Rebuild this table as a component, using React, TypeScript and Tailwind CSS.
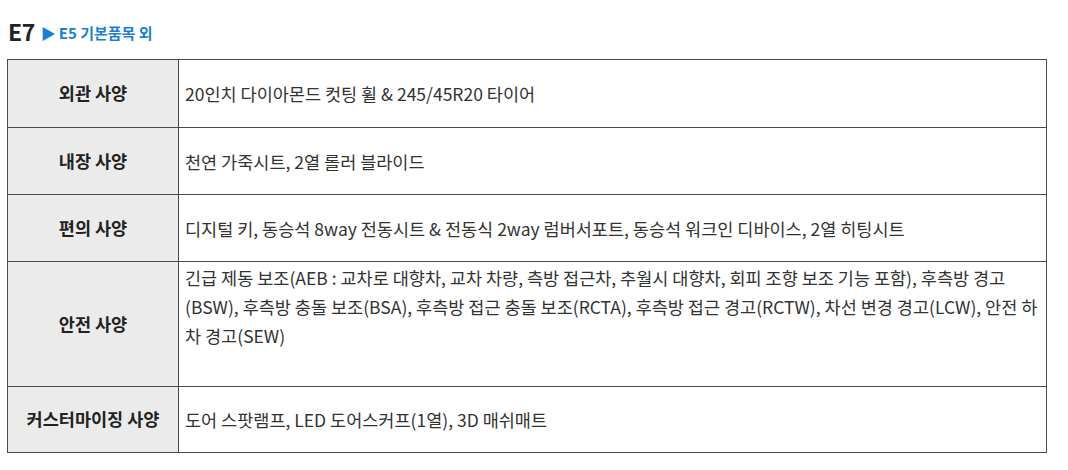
import React from "react";

const font = { fontFamily: '"Noto Sans CJK KR", "Noto Sans", sans-serif' };

const rows: { h: string; label: string; text: string; top?: boolean }[] = [
  { h: "h-[68px]", label: "외관 사양", text: "20인치 다이아몬드 컷팅 휠 & 245/45R20 타이어" },
  { h: "h-[67px]", label: "내장 사양", text: "천연 가죽시트, 2열 롤러 블라이드" },
  { h: "h-[67px]", label: "편의 사양", text: "디지털 키, 동승석 8way 전동시트 & 전동식 2way 럼버서포트, 동승석 워크인 디바이스, 2열 히팅시트" },
  {
    h: "h-[125px]",
    label: "안전 사양",
    text: "긴급 제동 보조(AEB : 교차로 대향차, 교차 차량, 측방 접근차, 추월시 대향차, 회피 조향 보조 기능 포함), 후측방 경고(BSW), 후측방 충돌 보조(BSA), 후측방 접근 충돌 보조(RCTA), 후측방 접근 경고(RCTW), 차선 변경 경고(LCW), 안전 하차 경고(SEW)",
    top: true,
  },
  { h: "h-[66px]", label: "커스터마이징 사양", text: "도어 스팟램프, LED 도어스커프(1열), 3D 매쉬매트" },
];

export default function App() {
  return (
    <div className="w-[1068px] h-[470px] bg-white" style={font}>
      <div className="flex items-end pl-[8px] pt-[14px] h-[59px] pb-[16px] gap-[6px]">
        <span className="text-[23px] leading-[24px] font-bold text-[#222] tracking-[-0.5px]">E7</span>
        <span className="text-[15px] leading-[18px] font-bold text-[#1a7fd4] flex items-center gap-[3px] mb-[1px]">
          <span className="text-[15px]">▶</span>
          <span>E5 기본품목 외</span>
        </span>
      </div>
      <table className="ml-[7px] w-[1040px] border-collapse table-fixed">
        <colgroup>
          <col className="w-[171px]" />
          <col />
        </colgroup>
        <tbody>
          {rows.map((r) => (
            <tr key={r.label} className={r.h}>
              <td className="border border-[#4a4a4a] bg-[#ebebeb] text-center font-bold text-[17.5px] text-[#222] align-middle">
                {r.label}
              </td>
              <td
                className={
                  "border border-[#4a4a4a] pl-[6px] pr-[6px] text-[17.5px] leading-[29px] text-[#333] " +
                  (r.top ? "align-top pt-[1px]" : "align-middle")
                }
              >
                {r.text}
              </td>
            </tr>
          ))}
        </tbody>
      </table>
    </div>
  );
}
